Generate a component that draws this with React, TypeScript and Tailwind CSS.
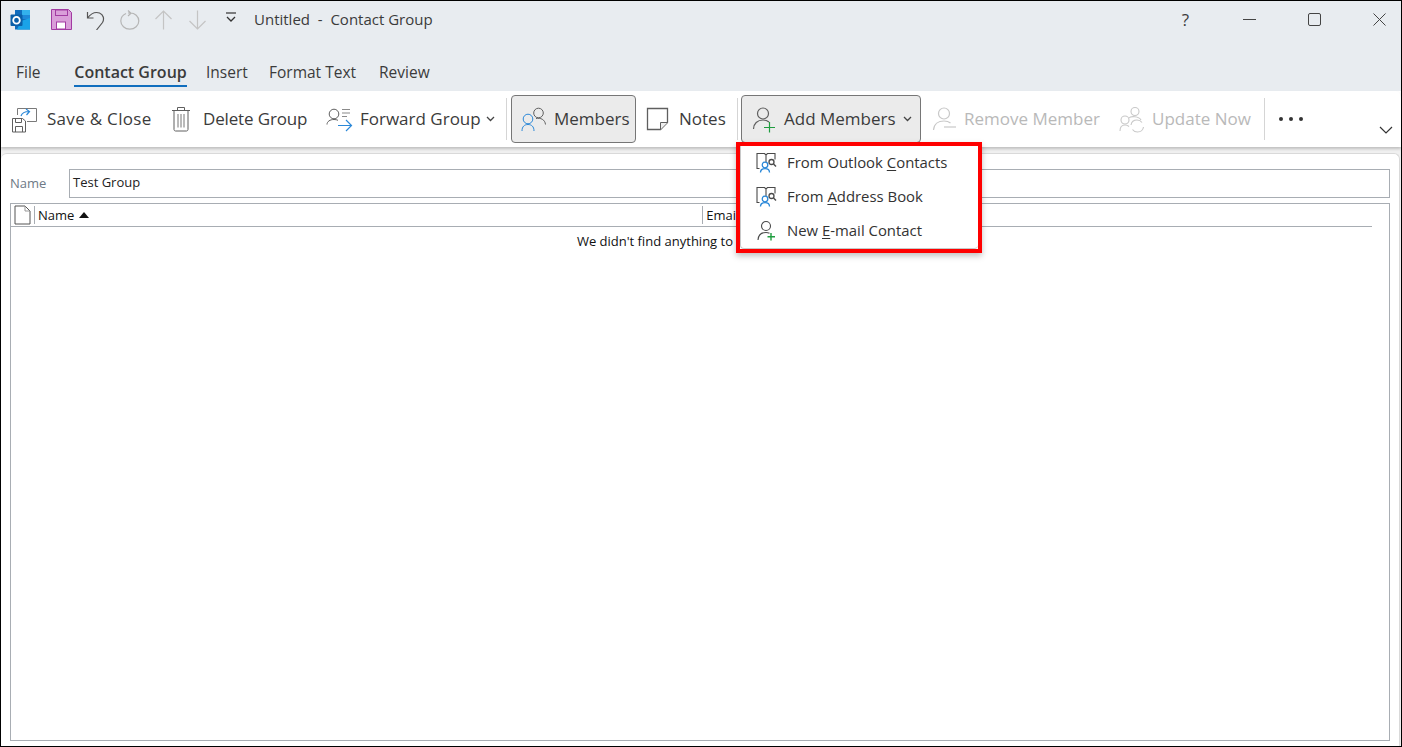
import { Fragment } from 'react';

const FONT = "font-['Open_Sans',_'Noto_Sans',_sans-serif]";

const Person = ({ x = 0, y = 0, color = '#5f5f5f' }: { x?: number; y?: number; color?: string }) => (
  <g transform={`translate(${x} ${y})`} fill="none" stroke={color} strokeWidth="1.2">
    <circle cx="11" cy="7.5" r="5.5" />
    <path d="M1.5 23c0-5.5 4-9 9.5-9 2.500 0 4.500.7 6 2" />
  </g>
);

const SaveCloseIcon = () => (
  <svg width="27" height="27" viewBox="0 0 27 27" fill="none">
    <path d="M6.500 9V2.500h19v13H16" stroke="#7a7a7a" />
    <path d="M10 10c1-3 4-4.500 8-4.500M15 3l3.500 2.500L15.500 9" stroke="#2b88d8" strokeWidth="1.200" />
    <path d="M1.500 12.500h10l3 2.500v11h-13z" fill="#fff" stroke="#5f5f5f" />
    <path d="M4.500 12.500v4h6v-4M4.500 26v-5.500h7V26" stroke="#5f5f5f" />
  </svg>
);

const TrashIcon = () => (
  <svg width="20" height="26" viewBox="0 0 20 26" fill="none" stroke="#5f5f5f">
    <path d="M1 4.500h18M6.500 4.500V1.500h7v3" />
    <path d="M3 4.500v19c0 .8.700 1.500 1.500 1.500h11c.8 0 1.500-.7 1.500-1.500v-19" />
    <path d="M7 8v13.500M10 8v13.500M13 8v13.500" stroke="#777" />
  </svg>
);

const ForwardIcon = () => (
  <svg width="27" height="25" viewBox="0 0 27 25" fill="none">
    <circle cx="8" cy="7" r="4.800" stroke="#5f5f5f" />
    <path d="M1 17.500c0-3 3-5 7-5 1.500 0 3 .3 4 .8" stroke="#5f5f5f" />
    <path d="M16 2.500h8M16 6h8M16 9.500h5" stroke="#8a8a8a" strokeWidth="1.200" />
    <path d="M12 18.500h13M20 13l5.500 5.500L20 24" stroke="#2b88d8" strokeWidth="1.200" />
  </svg>
);

const MembersIcon = () => (
  <svg width="26" height="26" viewBox="0 0 26 26" fill="none">
    <circle cx="17.500" cy="7" r="4.800" stroke="#5f5f5f" />
    <path d="M15 12.500c4.500-1 9 1 9.500 6" stroke="#5f5f5f" />
    <circle cx="7" cy="13" r="4.800" stroke="#2b88d8" />
    <path d="M1 25c0-4.500 2.500-6.500 6-6.500s6 2 6 6.500" stroke="#2b88d8" />
  </svg>
);

const NotesIcon = () => (
  <svg width="23" height="24" viewBox="0 0 23 24" fill="none">
    <path d="M1.500 1.500h20v14l-7 7h-13z" fill="#fff" stroke="#5f5f5f" strokeWidth="1.300" />
    <path d="M21.500 15.500h-7v7" fill="#eee" stroke="#5f5f5f" />
  </svg>
);

const AddMemberIcon = () => (
  <svg width="26" height="27" viewBox="0 0 26 27" fill="none">
    <Person />
    <path d="M17.500 16v10.500M12 21.500h11" stroke="#1f9d3f" strokeWidth="1.200" />
  </svg>
);

const RemoveMemberIcon = () => (
  <svg width="26" height="27" viewBox="0 0 26 27" fill="none">
    <circle cx="12" cy="7.500" r="5.500" stroke="#c8c8c8" strokeWidth="1.200" />
    <path d="M1.500 24c.5-6 5-9 10.500-9 3 0 5 .8 6.500 2" stroke="#c8c8c8" strokeWidth="1.200" />
    <path d="M12 21h12" stroke="#c8c8c8" strokeWidth="1.200" />
  </svg>
);

const UpdateIcon = () => (
  <svg width="27" height="27" viewBox="0 0 27 27" fill="none" stroke="#c8c8c8" strokeWidth="1.100">
    <circle cx="16" cy="5.500" r="4" />
    <path d="M10 12c1.500-2 10-2 12 2" />
    <circle cx="6" cy="14" r="4" />
    <path d="M1 25c0-4 2-6 5-6 1.500 0 3 .5 4 1.500" />
    <path d="M12 19c.5-3 3-5 6-5 2.500 0 4 1 5 2.500M24.500 21c-.5 3-3 5-6 5-2.500 0-4-1-5-2.500" />
  </svg>
);

const BookPersonIcon = () => (
  <svg width="21" height="22" viewBox="0 0 21 22" fill="none">
    <path d="M3.500 17.500H1V2.500h7.500l1.500 1.500 1.500-1.500H19v6M10 4v7" stroke="#4a4a4a" strokeWidth="1.100" />
    <circle cx="9" cy="14" r="2.800" stroke="#2b88d8" strokeWidth="1.300" />
    <path d="M4.500 21.500c0-2.500 2-3.800 4.500-3.800s4.500 1.300 4.500 3.800" stroke="#2b88d8" strokeWidth="1.300" />
    <circle cx="15.500" cy="11" r="2.500" stroke="#4a4a4a" strokeWidth="1.300" />
    <path d="M17.500 13l2.500 2.500" stroke="#4a4a4a" strokeWidth="1.400" />
  </svg>
);

const NewContactIcon = () => (
  <svg width="21" height="21" viewBox="0 0 21 21" fill="none">
    <circle cx="10" cy="6" r="4.500" stroke="#4a4a4a" strokeWidth="1.100" />
    <path d="M2 20c.3-5 3.500-7.500 8-7.500 1.500 0 2.500.3 3.500.8" stroke="#4a4a4a" strokeWidth="1.100" />
    <path d="M15 13v7.500M11.500 16.700h7.500" stroke="#1f9d3f" strokeWidth="1.400" />
  </svg>
);

const OutlookLogo = () => (
  <svg width="21" height="21" viewBox="0 0 21 21">
    <path d="M5 1h15v9H5z" fill="#1e88d8" />
    <path d="M5 1h7v9H5z" fill="#0f6cbd" />
    <path d="M12 1h8v5h-8z" fill="#33b1ec" />
    <path d="M5 10h15v10.500H5z" fill="#0f6cbd" />
    <path d="M11 12l9-3v11.500H7z" fill="#1aa3e8" />
    <rect x="0.500" y="5.500" width="12" height="11.500" rx="1" fill="#0a5fa8" />
    <ellipse cx="6.500" cy="11.200" rx="3.300" ry="3.400" fill="none" stroke="#fff" strokeWidth="1.800" />
  </svg>
);

const SaveIcon = () => (
  <svg width="21" height="21" viewBox="0 0 21 21">
    <path d="M.5.500h17l3 3v17H.500z" fill="#d99ed9" stroke="#a23ba2" />
    <rect x="4.500" y="1" width="12" height="5.500" fill="#d99ed9" stroke="#a23ba2" />
    <rect x="5.500" y="13" width="9" height="7" fill="#fff" stroke="#a23ba2" />
  </svg>
);

const QuickIcon = ({ children }: { children: React.ReactNode }) => (
  <svg width="20" height="20" viewBox="0 0 20 20" fill="none" strokeWidth="1.200">
    {children}
  </svg>
);

const Chevron = ({ className = '', color = '#444' }: { className?: string; color?: string }) => (
  <svg width="9" height="6" viewBox="0 0 9 6" fill="none" className={className}>
    <path d="M1 1l3.500 3.500L8 1" stroke={color} strokeWidth="1.300" />
  </svg>
);

const Sep = ({ className = '' }: { className?: string }) => <div className={`h-[42px] w-px bg-[#d5d5d5] ${className}`} />;

const tabs = [
  { label: 'Insert', w: 'w-[63px]' },
  { label: 'Format Text', w: 'w-[110px]' },
  { label: 'Review', w: 'w-[60px]' },
];

const menuItems = [
  { icon: <BookPersonIcon />, pre: 'From Outlook ', key: 'C', post: 'ontacts' },
  { icon: <BookPersonIcon />, pre: 'From ', key: 'A', post: 'ddress Book' },
  { icon: <NewContactIcon />, pre: 'New ', key: 'E', post: '-mail Contact' },
];

export default function App() {
  return (
    <div className={`${FONT} relative flex h-[747px] w-[1402px] flex-col overflow-hidden border border-black bg-white`}>
      {/* title bar */}
      <div className="flex h-[90px] flex-col bg-[#e8ecf0]">
        <div className="flex h-[36px] items-center pl-[9px] pt-px text-[#3b3b3b]">
          <OutlookLogo />
          <div className="ml-[20px]"><SaveIcon /></div>
          <div className="ml-[14px]">
            <QuickIcon>
              <path d="M1.500 2v6h6M1.500 8C5 3.500 9 1.500 13.500 3c4 1.500 5 6 3 9.500L10.500 20" stroke="#555" />
            </QuickIcon>
          </div>
          <div className="ml-[14px]">
            <QuickIcon>
              <path d="M6 3.500C2.500 5 .8 8 .8 11c0 4.500 4 8.200 9 8.200s9-3.700 9-8.200c0-4.500-4-8-8.500-8H8M8 .5l3 2.800L8 6" stroke="#b5b5b5" />
            </QuickIcon>
          </div>
          <div className="ml-[14px]">
            <QuickIcon>
              <path d="M9.500 19.500V1.500M1.500 9l8-8 8 8" stroke="#c4c4c4" />
            </QuickIcon>
          </div>
          <div className="ml-[14px]">
            <QuickIcon>
              <path d="M9.500.5v18M1.500 11l8 8 8-8" stroke="#c4c4c4" />
            </QuickIcon>
          </div>
          <svg width="12" height="11" viewBox="0 0 12 11" fill="none" className="ml-[17px] mb-[4px]">
            <path d="M1 1h10" stroke="#333" strokeWidth="1.200" />
            <path d="M2 5l4 4 4-4" stroke="#333" strokeWidth="1.300" />
          </svg>
          <span className="ml-[17px] whitespace-pre text-[15px]">Untitled  -  Contact Group</span>
          <div className="ml-auto flex items-center">
            <span className="mr-[54px] text-[17px]">?</span>
            <div className="mr-[52px] h-px w-[13px] bg-[#444]" />
            <div className="mr-[52px] h-[13px] w-[13px] rounded-[2px] border border-[#444]" />
            <svg width="13" height="13" viewBox="0 0 13 13" className="mr-[15px]">
              <path d="M.5.500l12 12M12.500.500l-12 12" stroke="#444" />
            </svg>
          </div>
        </div>
        <div className="flex h-[54px] items-start pl-[15px] pt-[23px] text-[15.500px] leading-[24px] text-[#3b3b3b]">
          <span className="w-[58px]">File</span>
          <div className="mr-[19px] w-[113px] border-b-2 border-[#106ebe] pb-[1px] text-center text-[16px] font-semibold whitespace-nowrap">
            Contact Group
          </div>
          {tabs.map((t) => (
            <span key={t.label} className={`${t.w} whitespace-nowrap`}>
              {t.label}
            </span>
          ))}
        </div>
      </div>

      {/* ribbon */}
      <div className="relative flex h-[56px] items-center rounded-tr-md bg-white pl-[10px] text-[17px] text-[#3b3b3b] shadow-[0_2px_3px_rgba(0,0,0,0.2)]">
        <SaveCloseIcon />
        <span className="ml-[9px] w-[104px] whitespace-nowrap tracking-[0.3px]">Save &amp; Close</span>
        <div className="ml-[20px]"><TrashIcon /></div>
        <span className="ml-[12px] w-[104px] whitespace-nowrap tracking-[-0.15px]">Delete Group</span>
        <div className="ml-[19px]"><ForwardIcon /></div>
        <span className="ml-[7px] w-[120px] whitespace-nowrap">Forward Group</span>
        <Chevron className="ml-[6px]" />
        <Sep className="ml-[11px]" />
        <div className="ml-[4px] flex h-[48px] w-[125px] items-center rounded-[4px] border border-[#767676] bg-[#ebebeb] pl-[9px]">
          <MembersIcon />
          <span className="ml-[7px] whitespace-nowrap">Members</span>
        </div>
        <div className="ml-[10px]"><NotesIcon /></div>
        <span className="ml-[10px] w-[47px]">Notes</span>
        <Sep className="ml-[11px]" />
        <div className="ml-[3px] flex h-[48px] w-[180px] items-center rounded-[4px] border border-[#767676] bg-[#ebebeb] pl-[10px]">
          <AddMemberIcon />
          <span className="ml-[6px] w-[114px] whitespace-nowrap">Add Members</span>
          <Chevron className="ml-[5px]" />
        </div>
        <div className="ml-[11px]"><RemoveMemberIcon /></div>
        <span className="ml-[6px] w-[136px] whitespace-nowrap text-[#b9b9b9]">Remove Member</span>
        <div className="ml-[19px]"><UpdateIcon /></div>
        <span className="ml-[6px] w-[100px] whitespace-nowrap text-[#b9b9b9]">Update Now</span>
        <Sep className="ml-[12px]" />
        <div className="ml-[14px] flex gap-[6px]">
          {[0, 1, 2].map((i) => (
            <Fragment key={i}>
              <div className="h-[4px] w-[4px] rounded-full bg-[#333]" />
            </Fragment>
          ))}
        </div>
        <svg width="14" height="8" viewBox="0 0 14 8" fill="none" className="mt-[22px] ml-[76px]">
          <path d="M1 1l6 6 6-6" stroke="#333" strokeWidth="1.200" />
        </svg>
      </div>

      {/* body */}
      <div className="flex flex-1 flex-col bg-[#f0f0f0] pt-[6px]">
        <div className="mr-[1px] flex flex-1 flex-col rounded-t-md border-t border-r border-[#d9d9d9] bg-white pl-[9px] pr-[9px]">
          <div className="mt-[15px] flex h-[29px] items-center">
            <span className="w-[59px] text-[13px] text-[#6e7a86]">Name</span>
            <div className="flex h-[29px] flex-1 items-center border border-[#a8adb3] pb-[2px] pl-[3px] text-[13px] text-[#222]">
              Test Group
            </div>
          </div>
          <div className="mt-[5px] mb-[5px] flex flex-1 flex-col border border-[#a8adb3]">
            <div className="mr-[17px] flex h-[23px] items-center border-b border-[#a8adb3] pl-[3px] text-[13px] text-[#111]">
              <svg width="17" height="20" viewBox="0 0 17 20" fill="none">
                <path d="M1 1h10l5 5v13H1z" fill="#fff" stroke="#555" />
                <path d="M11 1v5h5" stroke="#999" />
              </svg>
              <div className="ml-[3px] h-[18px] w-px bg-[#a8adb3]" />
              <span className="ml-[3px] pt-[2px]">Name</span>
              <svg width="10" height="6" viewBox="0 0 10 6" className="ml-[5px]">
                <path d="M0 6l5-6 5 6z" fill="#111" />
              </svg>
              <div className="ml-[613px] h-[18px] w-px bg-[#a8adb3]" />
              <span className="ml-[3px] pt-[2px]">Email</span>
            </div>
            <div className="pt-[5px] pr-[20px] text-center text-[13px] leading-[18px] text-[#111]">
              We didn&apos;t find anything to show here.
            </div>
          </div>
        </div>
      </div>

      {/* add members menu */}
      <div className="absolute left-[735px] top-[141px] h-[111px] w-[246px] border-[4px] border-[#ff0000] bg-white shadow-[0_3px_6px_rgba(0,0,0,0.25)]">
        <div className="flex h-full flex-col rounded-b-[4px] border-b border-l border-[#c8c8c8] pl-[15px] text-[14.900px] text-[#333]">
          {menuItems.map((m) => (
            <div key={m.pre} className="-mt-px mb-px flex h-[34px] items-center">
              {m.icon}
              <span className="ml-[10px] whitespace-nowrap">
                {m.pre}
                <span className="underline underline-offset-2">{m.key}</span>
                {m.post}
              </span>
            </div>
          ))}
        </div>
      </div>
    </div>
  );
}
